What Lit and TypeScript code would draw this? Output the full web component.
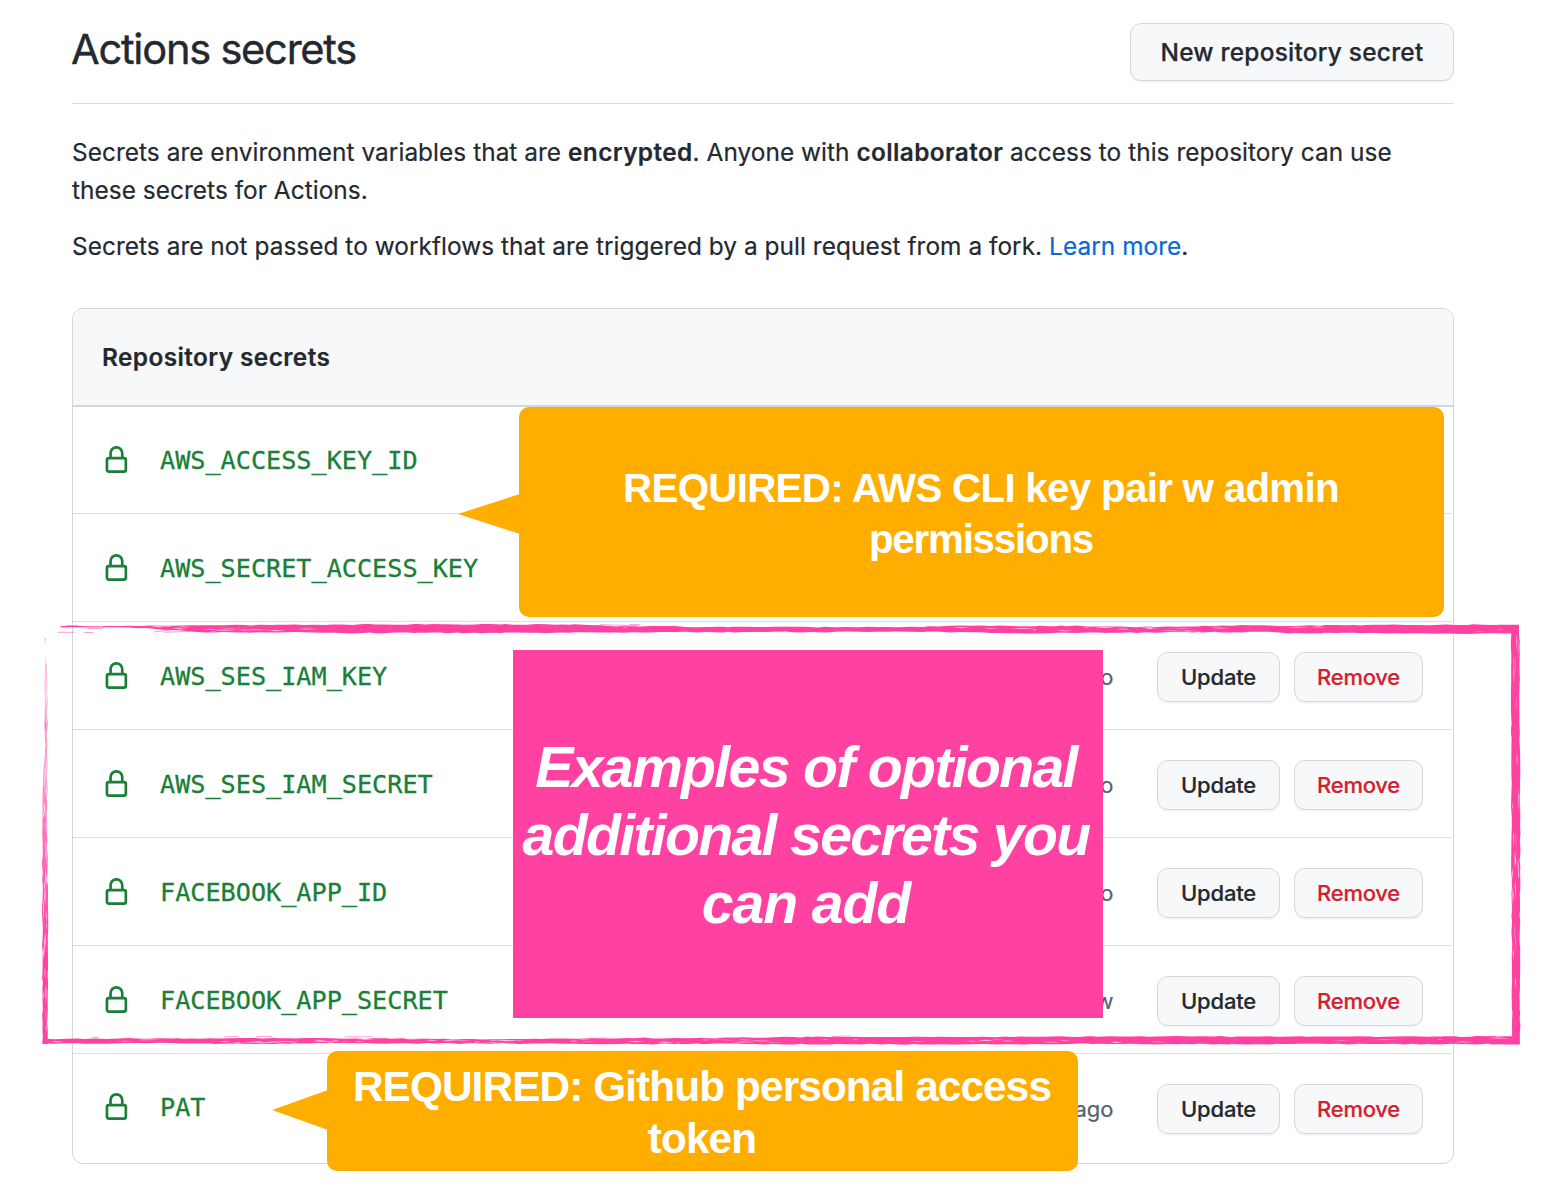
import { LitElement, html, svg, css } from "lit";
import { customElement, property } from "lit/decorators.js";

type Secret = { name: string; age?: string };

const SECRETS: Secret[] = [
  { name: "AWS_ACCESS_KEY_ID" },
  { name: "AWS_SECRET_ACCESS_KEY" },
  { name: "AWS_SES_IAM_KEY", age: "ago" },
  { name: "AWS_SES_IAM_SECRET", age: "ago" },
  { name: "FACEBOOK_APP_ID", age: "ago" },
  { name: "FACEBOOK_APP_SECRET", age: "now" },
  { name: "PAT", age: "ago" },
];

/* Brush edges: [distance along the edge, near side, far side, dryness 0..1] */
type Stop = [number, number, number, number];

const TOP: Stop[] = [
  [103, 626.4, 627.4, 0], [130, 625.7, 627.8, 0.1], [150, 625.3, 628.4, 0.4], [180, 625.3, 630.8, 0.9],
  [205, 625.3, 632.3, 0.8], [235, 625, 632.4, 0.4], [300, 624.7, 632.4, 0.12], [345, 624.5, 633.2, 0.05],
  [400, 624.3, 632.8, 0], [500, 624.2, 633.1, 0], [583, 624.4, 632.8, 0.03], [610, 626, 632.6, 0.05],
  [668, 626.3, 632.2, 0], [720, 627, 632.2, 0], [910, 626.8, 631.9, 0], [935, 626.2, 632, 0.1],
  [985, 625.4, 632.8, 0.3], [1020, 625.8, 633.2, 0.1], [1080, 625.8, 632.8, 0.1], [1130, 626.8, 632.6, 0.25],
  [1200, 626, 632.4, 0.2], [1260, 625.1, 632, 0.02], [1290, 625.6, 633.2, 0.2], [1350, 625.3, 633.2, 0.2],
  [1385, 624.8, 633.6, 0], [1455, 624.6, 633.8, 0], [1480, 624.4, 633.4, 0.35], [1519, 624.8, 633.8, 0.1],
];
const BOTTOM: Stop[] = [
  [43, 1039, 1043.8, 0.2], [100, 1038.6, 1043.5, 0.3], [160, 1038.4, 1043.2, 0.3], [240, 1038.2, 1044.2, 0.45],
  [300, 1038.4, 1043.4, 0.45], [400, 1038.6, 1043.4, 0.35], [500, 1039.2, 1043.6, 0.6], [560, 1038.8, 1043.6, 0.25],
  [620, 1038, 1044.2, 0.15], [710, 1037.8, 1043.8, 0.4], [780, 1037, 1044.2, 0.15], [840, 1036.8, 1044.2, 0.3],
  [900, 1036.8, 1044.4, 0.1], [1000, 1036.8, 1044.2, 0.25], [1080, 1036.4, 1044, 0.1], [1200, 1036.4, 1044.2, 0.05],
  [1330, 1036.6, 1044.2, 0.05], [1420, 1036.4, 1044.2, 0.15], [1519.5, 1036.2, 1044.4, 0.1],
];
const RIGHT: Stop[] = [
  [625, 1511.2, 1519.2, 0.3], [660, 1511, 1520, 0.2], [720, 1511.3, 1519.6, 0.1], [790, 1511.2, 1520.2, 0.4],
  [850, 1511.4, 1520.2, 0.7], [920, 1511.6, 1520, 0.7], [970, 1511.8, 1520, 0.4], [1044, 1512, 1520, 0.1],
];
const LEFT: Stop[] = [
  [638, 44.9, 45.9, 0], [655, 44.6, 46.2, 0.5], [690, 44.8, 47.4, 0.8], [725, 44.8, 47.4, 0.4], [755, 44.8, 47.4, 0.8],
  [775, 43.2, 47.4, 1], [820, 42.4, 47.2, 1], [860, 42.2, 47.6, 0.7], [930, 42.4, 48, 0.7],
  [1000, 42.4, 47.8, 0.5], [1044, 42.3, 47.6, 0.2],
];

function random(seed: number) {
  let s = seed;
  return () => ((s = (s * 16807) % 2147483647) / 2147483647);
}

function at(stops: Stop[], d: number): [number, number, number] {
  let i = 1;
  while (i < stops.length - 1 && stops[i][0] < d) i++;
  const a = stops[i - 1];
  const b = stops[i];
  const k = Math.min(1, Math.max(0, (d - a[0]) / (b[0] - a[0])));
  return [1, 2, 3].map((n) => a[n] + (b[n] - a[n]) * k) as [number, number, number];
}

/** Rough filled band along one side plus the pale bristle gaps inside it. */
function brush(stops: Stop[], vertical: boolean, seed: number, paint = "paint") {
  const rnd = random(seed);
  const pt = (d: number, o: number) => (vertical ? `${o.toFixed(1)} ${d.toFixed(1)}` : `${d.toFixed(1)} ${o.toFixed(1)}`);
  const start = stops[0][0];
  const end = stops[stops.length - 1][0];
  const near: string[] = [];
  const far: string[] = [];
  for (let d = start; d < end; d += 4 + rnd() * 9) {
    const [a, b] = at(stops, d);
    near.push(pt(d, a + (rnd() - 0.4) * 0.9));
    far.unshift(pt(d, b - (rnd() - 0.4) * 0.9));
  }
  const last = at(stops, end);
  const band = `M${[...near, pt(end, last[0]), pt(end, last[1]), ...far].join("L")}Z`;
  let gaps = "";
  for (let d = start + 2; d < end - 12; d += 3) {
    const [a, b, dry] = at(stops, d);
    if (rnd() > dry * 0.5) continue;
    const o = a + 1 + rnd() * Math.max(0, b - a - 2);
    const len = 6 + rnd() * 20;
    const t = 0.25 + rnd() * 0.35;
    const e = Math.min(end - 5, d + len);
    gaps += `M${pt(d, o)}L${pt(d + len * 0.4, o - t)}L${pt(e, o + 0.2)}L${pt(d + len * 0.5, o + t)}Z`;
  }
  return svg`<path class=${paint} d=${band}></path><path class="gap" d=${gaps}></path>`;
}

@customElement("secret-row")
class SecretRow extends LitElement {
  @property({ attribute: false }) secret!: Secret;

  static styles = css`
    :host { display: flex; align-items: center; height: 108px; box-sizing: border-box; padding: 2px 29px 0 29px; font-family: Inter, "Liberation Sans", sans-serif; }
    .lock { width: 28.8px; height: 28.8px; flex: none; fill: #1a7f37; }
    .name { margin: 1px 0 0 29.2px; flex: 1; font: 25.2px/38px "DejaVu Sans Mono", monospace; color: #1a7f37; letter-spacing: -0.014px; -webkit-text-stroke: 0.3px #1a7f37; }
    .actions { display: flex; align-items: center; padding-top: 2px; }
    .age { font-size: 22px; color: #57606a; margin-right: 43.5px; -webkit-text-stroke: 0.2px; }
    .btn { box-sizing: border-box; height: 50px; width: 123px; padding: 0; margin: 0 0 0 14px; border: 1px solid #d3d8dd; border-radius: 11px; background: #f6f8fa; font: 500 22px/48px Inter, sans-serif; color: #24292f; letter-spacing: -0.2px; box-shadow: 0 2px 1px rgba(31, 35, 40, 0.04); text-align: center; -webkit-text-stroke: 0.2px; }
    .age + .btn { margin-left: 0; }
    .danger { width: 129px; color: #cf222e; letter-spacing: -0.25px; }
  `;

  render() {
    const { name, age } = this.secret;
    return html`
      <svg class="lock" viewBox="0 0 16 16"><path fill-rule="evenodd" d="M4 4v2h-.25A1.75 1.75 0 002 7.75v5.5c0 .966.784 1.75 1.75 1.75h8.5A1.75 1.75 0 0014 13.25v-5.5A1.75 1.75 0 0012.25 6H12V4a4 4 0 10-8 0zm6.5 2V4a2.5 2.5 0 00-5 0v2h5zM12 7.5h.25a.25.25 0 01.25.25v5.5a.25.25 0 01-.25.25h-8.5a.25.25 0 01-.25-.25v-5.5a.25.25 0 01.25-.25H12z"></path></svg>
      <span class="name">${name}</span>
      ${age
        ? html`<div class="actions">
            <span class="age">${age}</span>
            <button class="btn">Update</button>
            <button class="btn danger">Remove</button>
          </div>`
        : null}
    `;
  }
}

@customElement("app-root")
class AppRoot extends LitElement {
  static styles = css`
    :host { display: block; position: relative; box-sizing: border-box; width: 1568px; height: 1202px; overflow: hidden; padding: 23px 114px 0 72px; background: #fff; color: #24292f; font-family: Inter, "Liberation Sans", sans-serif; }
    .head { display: flex; justify-content: space-between; align-items: flex-start; height: 80px; border-bottom: 1px solid #d8dee4; }
    h1 { margin: 0 0 0 -1px; font-size: 41.6px; line-height: 52px; font-weight: 400; letter-spacing: -1.24px; -webkit-text-stroke: 0.4px #24292f; }
    .new { box-sizing: border-box; width: 324px; height: 58px; border: 1px solid #d3d8dd; border-radius: 11px; background: #f6f8fa; color: #24292f; font: 500 24.4px/56px Inter, sans-serif; letter-spacing: 0.25px; padding: 0; box-shadow: 0 2px 1px rgba(31, 35, 40, 0.04); -webkit-text-stroke: 0.25px; }
    p { margin: 30.3px 0 0; font-size: 24.4px; line-height: 37.8px; letter-spacing: 0.045px; white-space: nowrap; -webkit-text-stroke: 0.2px; }
    p + p { margin-top: 18px; }
    b { font-weight: 600; letter-spacing: 0.37px; }
    a { color: #0969da; text-decoration: none; }
    .box { margin-top: 42px; border: 1px solid #d0d7de; border-radius: 11px; height: 854px; }
    .box-head { display: flex; align-items: center; height: 96px; padding-left: 29px; background: #f6f8fa; border-bottom: 2px solid #d0d7de; border-radius: 10px 10px 0 0; font-size: 24.4px; font-weight: 600; letter-spacing: 0.4px; -webkit-text-stroke: 0.2px; }
    secret-row { border-bottom: 1px solid #d8dee4; margin-right: 1px; }
    .box-head + secret-row { height: 107px; padding-top: 1px; }
    secret-row:last-child { border-bottom: 0; padding-top: 0; }
    .callout { position: absolute; display: flex; flex-direction: column; align-items: center; box-sizing: border-box; background: #ffae00; color: #fff; border-radius: 10px; font-family: "Liberation Sans", Arial, sans-serif; font-weight: 700; white-space: nowrap; }
    .tail { position: absolute; background: #ffae00; clip-path: polygon(0 50%, 100% 0, 100% 100%); }
    .keys { left: 519px; top: 407px; width: 925px; height: 210px; padding: 57px 1px 0 0; font-size: 40.3px; line-height: 50.5px; letter-spacing: -0.7px; }
    .keys .tail { left: -61px; top: 87px; width: 62px; height: 40px; }
    .keys .second { letter-spacing: -1.2px; }
    .token { left: 327px; top: 1051px; width: 751px; height: 120px; padding: 10px 1px 0 0; font-size: 42.3px; line-height: 52px; letter-spacing: -0.88px; }
    .token .tail { left: -55px; top: 39px; width: 56px; height: 40px; }
    .examples { position: absolute; left: 513px; top: 650px; width: 590px; height: 368px; box-sizing: border-box; padding: 83px 4px 0 0; background: #ff42a1; color: #fff; display: flex; flex-direction: column; align-items: center; font: italic 700 57.2px/68px "Liberation Sans", Arial, sans-serif; letter-spacing: -1.68px; white-space: nowrap; }
    .examples .short { letter-spacing: -1.1px; }
    .frame { position: absolute; left: 0; top: 0; width: 1568px; height: 1202px; pointer-events: none; }
    .paint { fill: #ff42a1; }
    .faded { fill: url(#fade); }
    .gap { fill: #fff; opacity: 0.7; }
    .wisp { stroke: #ff42a1; fill: none; stroke-linecap: round; }
  `;

  render() {
    return html`
      <div class="head">
        <h1>Actions secrets</h1>
        <button class="new">New repository secret</button>
      </div>
      <p>Secrets are environment variables that are <b>encrypted</b>. Anyone with <b>collaborator</b> access to this repository can use<br />these secrets for Actions.</p>
      <p>Secrets are not passed to workflows that are triggered by a pull request from a fork. <a>Learn more</a>.</p>
      <div class="box">
        <div class="box-head">Repository secrets</div>${SECRETS.map((s) => html`<secret-row .secret=${s}></secret-row>`)}
      </div>
      <div class="callout keys">
        <i class="tail"></i>
        <span>REQUIRED: AWS CLI key pair w admin</span>
        <span class="second">permissions</span>
      </div>
      <svg class="frame" viewBox="0 0 1568 1202">
        <defs>
          <linearGradient id="fade" gradientUnits="userSpaceOnUse" x1="0" y1="638" x2="0" y2="960">
            <stop offset="0" stop-color="#ff42a1" stop-opacity="0.35"></stop>
            <stop offset="0.03" stop-color="#ff42a1" stop-opacity="0"></stop>
            <stop offset="0.05" stop-color="#ff42a1" stop-opacity="0"></stop>
            <stop offset="0.09" stop-color="#ff42a1" stop-opacity="0.55"></stop>
            <stop offset="0.18" stop-color="#ff42a1" stop-opacity="0.3"></stop>
            <stop offset="0.28" stop-color="#ff42a1" stop-opacity="0.75"></stop>
            <stop offset="0.4" stop-color="#ff42a1" stop-opacity="0.5"></stop>
            <stop offset="0.6" stop-color="#ff42a1" stop-opacity="0.75"></stop>
            <stop offset="1" stop-color="#ff42a1"></stop>
          </linearGradient>
        </defs>
        ${brush(TOP, false, 7)} ${brush(BOTTOM, false, 91)} ${brush(RIGHT, true, 43)} ${brush(LEFT, true, 17, "faded")}
        <path class="wisp" stroke-width="1.2" d="M61 626.6H80L104 627M66 626.2H78"></path>
        <path class="wisp" stroke-width="0.7" opacity="0.75" d="M58 632.3H74M84 632.3L93 632.6M88 628.6H102M154 632L170 630M164 632.2L190 631.4M600 624.8L638 625.6M630 624.4H640"></path>
        <path class="wisp" stroke-width="0.8" opacity="0.6" d="M92 1037.5H98M224 1037L238 1036.4M256 1036.6L272 1036.5M345 1036.8H372M590 1038.4L606 1038M832 1036.4L850 1036"></path>
      </svg>
      <div class="examples">
        <span>Examples of optional</span>
        <span>additional secrets you</span>
        <span class="short">can add</span>
      </div>
      <div class="callout token">
        <i class="tail"></i>
        <span>REQUIRED: Github personal access</span>
        <span>token</span>
      </div>
    `;
  }
}
